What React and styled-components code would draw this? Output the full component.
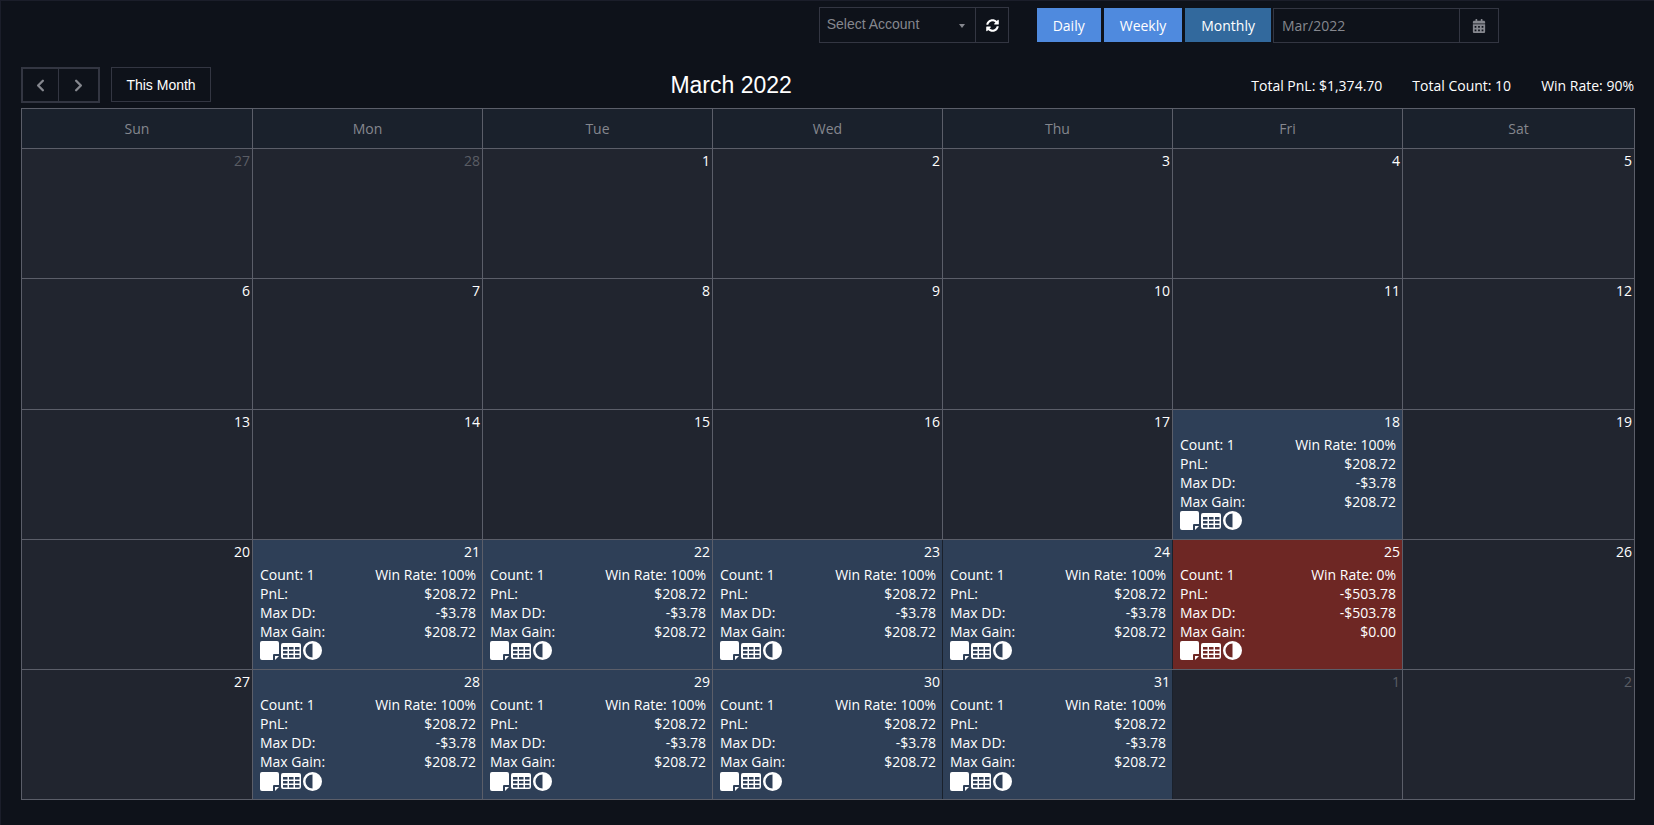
import React from 'react';
import styled, { createGlobalStyle } from 'styled-components';
import { FaCalendarAlt, FaSyncAlt } from 'react-icons/fa';
import { LuChevronLeft, LuChevronRight } from 'react-icons/lu';

const GlobalStyle = createGlobalStyle`
  html, body {
    margin: 0;
    background: #0e121a;
  }
  body {
    font-family: "Open Sans", "Liberation Sans", sans-serif;
    font-size: 14px;
    color: #fff;
  }
`;

const Page = styled.div`
  width: 1654px;
  height: 825px;
  box-sizing: border-box;
  padding: 6px 20px 0 20px;
  border-top: 1px solid #1b1e2a;
  border-left: 1px solid #1b1e2a;
  overflow: hidden;
`;

const TopBar = styled.div`
  display: flex;
  justify-content: flex-end;
  align-items: flex-start;
  height: 36px;
  padding-right: 135px;
`;

const AccountGroup = styled.div`
  display: flex;
  height: 36px;
  box-sizing: border-box;
  border: 1px solid #333642;
  margin-right: 28px;
`;

const AccountSelect = styled.div`
  width: 156px;
  box-sizing: border-box;
  padding: 0 7px 2px;
  display: flex;
  align-items: center;
  justify-content: space-between;
  color: #85878e;
  font-family: "Liberation Sans", sans-serif;
  font-size: 14px;
  border-right: 1px solid #333642;
`;

const Caret = styled.span`
  width: 0;
  height: 0;
  margin: 3px 3px 0 0;
  border-left: 3px solid transparent;
  border-right: 3px solid transparent;
  border-top: 4px solid #85878e;
`;

const RefreshButton = styled.div`
  width: 32px;
  box-sizing: border-box;
  padding-left: 1px;
  display: flex;
  align-items: center;
  justify-content: center;
  font-size: 13px;
`;

const RangeButton = styled.div`
  height: 34px;
  margin: 1px 3px 0 0;
  padding: 0 16px;
  display: flex;
  align-items: center;
  background: ${({ $active }) => ($active ? '#32699d' : '#4f8ade')};
  font-size: 14px;
`;

const DateBox = styled.div`
  display: flex;
  width: 226px;
  height: 35px;
  margin: 1px 0 0 -1px;
  box-sizing: border-box;
  border: 1px solid #333642;
`;

const DateValue = styled.div`
  flex: 1;
  padding-left: 8px;
  display: flex;
  align-items: center;
  color: #85878e;
  font-size: 14px;
  border-right: 1px solid #333642;
`;

const CalendarButton = styled.div`
  width: 38px;
  display: flex;
  align-items: center;
  justify-content: center;
  color: #85878e;
  font-size: 14px;
`;

const Toolbar = styled.div`
  display: flex;
  justify-content: space-between;
  align-items: center;
  height: 36px;
  margin-top: 24px;
  margin-bottom: 5px;
`;

const LeftTools = styled.div`
  display: flex;
  align-items: flex-start;
  height: 36px;
`;

const NavGroup = styled.div`
  display: flex;
  width: 79px;
  height: 36px;
  box-sizing: border-box;
  border: 2px solid #333642;
  margin-right: 11px;
`;

const NavButton = styled.div`
  flex: 1;
  display: flex;
  align-items: center;
  justify-content: center;
  color: #85878e;
  font-size: 19px;
  svg {
    stroke-width: 3;
  }
  &:first-child {
    flex: 0 0 35px;
  }
  & + & {
    border-left: 1px solid #333642;
  }
`;

const TodayButton = styled.div`
  width: 100px;
  height: 35px;
  box-sizing: border-box;
  border: 1px solid #333642;
  display: flex;
  align-items: center;
  justify-content: center;
  font-family: "Liberation Sans", sans-serif;
  font-size: 14px;
`;

const Title = styled.h2`
  margin: 0;
  font-family: "Liberation Sans", sans-serif;
  font-size: 23px;
  font-weight: 400;
  line-height: 28px;
`;

const Stats = styled.div`
  display: flex;
  gap: 30px;
  margin-top: 1px;
`;

const Table = styled.table`
  width: 1613px;
  table-layout: fixed;
  border-collapse: collapse;
  border: 1px solid #5b5e69;
`;

const Col = styled.col`
  width: ${({ $w }) => $w}px;
`;

const HeadCell = styled.th`
  height: 39px;
  padding: 0;
  background: #1a212c;
  border: 1px solid #5b5e69;
  color: #85878e;
  font-weight: 400;
  font-size: 14px;
`;

const bg = { win: '#2e3f57', loss: '#6e2724' };

const DayCell = styled.td`
  height: 127.25px;
  padding: 2px 0 0;
  vertical-align: top;
  background: ${({ $kind }) => bg[$kind] || '#21252f'};
  border: 1px solid #5b5e69;
  ${({ $seam }) => $seam && 'border-right-color: #1a212c;'}
`;

const DayNumber = styled.div`
  height: 19px;
  line-height: 19px;
  padding-right: 2px;
  text-align: right;
  color: ${({ $muted }) => ($muted ? '#5a5d65' : '#fff')};
`;

const EventBody = styled.div`
  margin-top: 4px;
  padding: 0 6px 0 7px;
`;

const EventRow = styled.div`
  display: flex;
  justify-content: space-between;
  height: 19px;
  line-height: 19px;
`;

const IconRow = styled.div`
  display: flex;
  align-items: center;
  gap: 2px;
  height: 20px;
`;

const NoteIcon = () => (
  <svg width="19" height="19" viewBox="0 0 19 19" fill="#fff">
    <path d="M2 0H17a2 2 0 0 1 2 2V13H14a1 1 0 0 0-1 1V19H2a2 2 0 0 1-2-2V2a2 2 0 0 1 2-2z" />
    <path d="M15 15H19L15 19z" />
  </svg>
);

// three rows of three cells punched out of a rounded block, header left solid
const gridCells = [4, 8, 12]
  .flatMap(y => [2, 8, 14].map(x => `M${x} ${y}h4.5v2.5H${x}z`))
  .join('');

const GridIcon = () => (
  <svg width="20" height="16" viewBox="0 0 20 16" fill="#fff">
    <path fillRule="evenodd" d={`M2 0H18a2 2 0 0 1 2 2V14a2 2 0 0 1-2 2H2a2 2 0 0 1-2-2V2a2 2 0 0 1 2-2z${gridCells}`} />
  </svg>
);

const HalfIcon = () => (
  <svg width="19" height="19" viewBox="0 0 19 19" fill="#fff">
    <path
      fillRule="evenodd"
      d="M9.5 0a9.5 9.5 0 1 0 0 19a9.5 9.5 0 1 0 0-19zM9.5 2.5V16.5a7 7 0 0 1 0-14z"
    />
  </svg>
);

const Stat = ({ label, value }) => (
  <EventRow>
    <span>{label}</span>
    <span>{value}</span>
  </EventRow>
);

const win = { kind: 'win', rate: '100%', pnl: '$208.72', dd: '-$3.78', gain: '$208.72' };
const loss = { kind: 'loss', rate: '0%', pnl: '-$503.78', dd: '-$503.78', gain: '$0.00' };

const weeks = [
  [{ d: 27, muted: true }, { d: 28, muted: true }, { d: 1 }, { d: 2 }, { d: 3 }, { d: 4 }, { d: 5 }],
  [{ d: 6 }, { d: 7 }, { d: 8 }, { d: 9 }, { d: 10 }, { d: 11 }, { d: 12 }],
  [{ d: 13 }, { d: 14 }, { d: 15 }, { d: 16 }, { d: 17 }, { d: 18, e: win }, { d: 19 }],
  [{ d: 20 }, { d: 21, e: win }, { d: 22, e: win }, { d: 23, e: win }, { d: 24, e: win }, { d: 25, e: loss }, { d: 26 }],
  [{ d: 27 }, { d: 28, e: win }, { d: 29, e: win }, { d: 30, e: win }, { d: 31, e: win }, { d: 1, muted: true }, { d: 2, muted: true }],
];

const days = ['Sun', 'Mon', 'Tue', 'Wed', 'Thu', 'Fri', 'Sat'];
const widths = [231, 230, 230, 230, 230, 230, 232];

export default function App() {
  return (
    <Page>
      <GlobalStyle />
      <TopBar>
        <AccountGroup>
          <AccountSelect>
            Select Account
            <Caret />
          </AccountSelect>
          <RefreshButton>
            <FaSyncAlt />
          </RefreshButton>
        </AccountGroup>
        <RangeButton>Daily</RangeButton>
        <RangeButton>Weekly</RangeButton>
        <RangeButton $active>Monthly</RangeButton>
        <DateBox>
          <DateValue>Mar/2022</DateValue>
          <CalendarButton>
            <FaCalendarAlt />
          </CalendarButton>
        </DateBox>
      </TopBar>
      <Toolbar>
        <LeftTools>
          <NavGroup>
            <NavButton>
              <LuChevronLeft />
            </NavButton>
            <NavButton>
              <LuChevronRight />
            </NavButton>
          </NavGroup>
          <TodayButton>This Month</TodayButton>
        </LeftTools>
        <Title>March 2022</Title>
        <Stats>
          <span>Total PnL: $1,374.70</span>
          <span>Total Count: 10</span>
          <span>Win Rate: 90%</span>
        </Stats>
      </Toolbar>
      <Table>
        <colgroup>
          {widths.map((w, i) => (
            <Col key={i} $w={w} />
          ))}
        </colgroup>
        <thead>
          <tr>
            {days.map(day => (
              <HeadCell key={day}>{day}</HeadCell>
            ))}
          </tr>
        </thead>
        <tbody>
          {weeks.map((week, i) => (
            <tr key={i}>
              {week.map(({ d, muted, e }, col) => (
                <DayCell key={d} $kind={e && e.kind} $seam={e && (col === 3 || col === 4)}>
                  <DayNumber $muted={muted}>{d}</DayNumber>
                  {e && (
                    <EventBody>
                      <Stat label="Count: 1" value={`Win Rate: ${e.rate}`} />
                      <Stat label="PnL:" value={e.pnl} />
                      <Stat label="Max DD:" value={e.dd} />
                      <Stat label="Max Gain:" value={e.gain} />
                      <IconRow>
                        <NoteIcon />
                        <GridIcon />
                        <HalfIcon />
                      </IconRow>
                    </EventBody>
                  )}
                </DayCell>
              ))}
            </tr>
          ))}
        </tbody>
      </Table>
    </Page>
  );
}
